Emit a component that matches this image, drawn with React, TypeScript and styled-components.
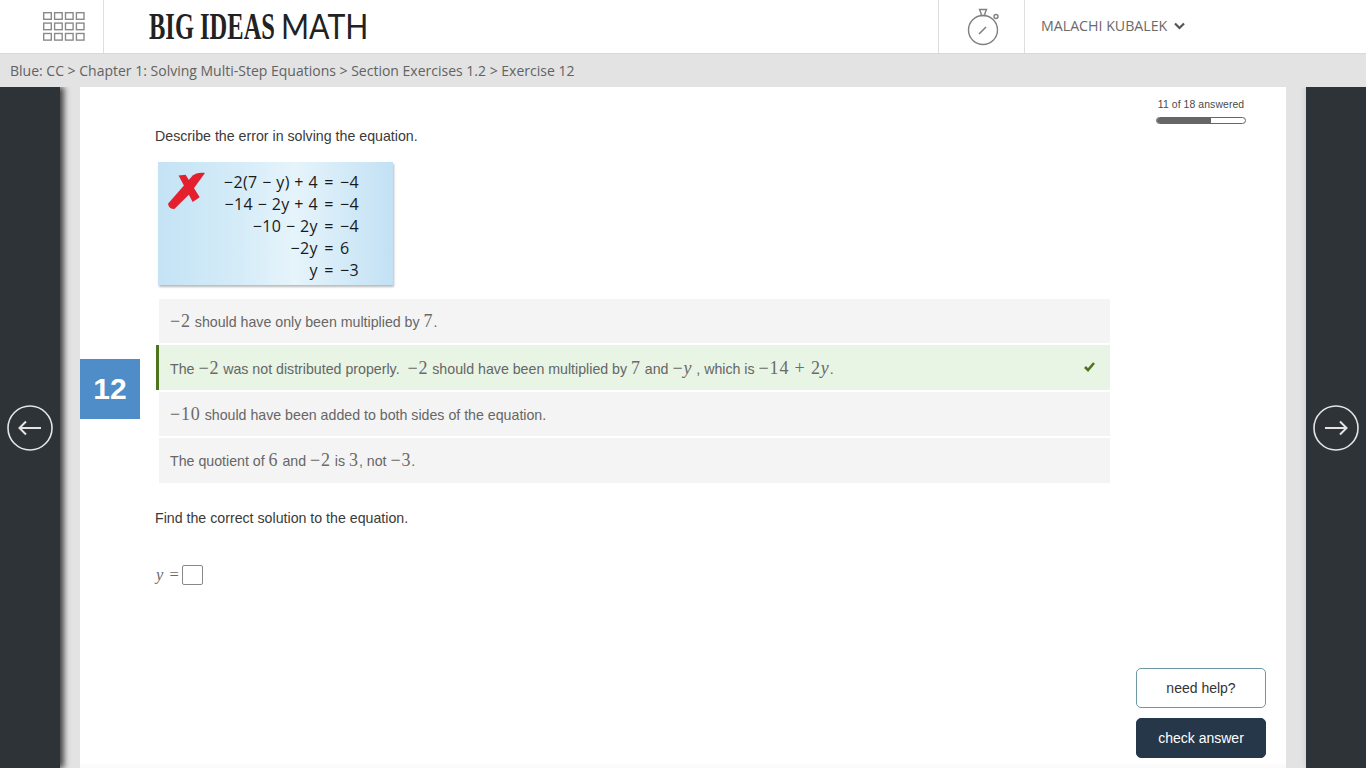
import React from "react";
import styled, { createGlobalStyle } from "styled-components";

const Global = createGlobalStyle`
  html, body { margin: 0; padding: 0; height: 768px; overflow: hidden; background: #e3e3e3; }
  * { box-sizing: border-box; }
  #root { height: 768px; }
`;

const Page = styled.div`
  width: 1366px; height: 768px; display: flex; flex-direction: column;
  font-family: "Liberation Sans", Arial, sans-serif;
`;
const Header = styled.header`
  height: 54px; flex: none; display: flex; background: #fff; border-bottom: 1px solid #d9d9d9;
`;
const MenuCell = styled.div`
  width: 104px; display: flex; align-items: center; padding-left: 43px;
  border-right: 1px solid #dedede;
`;
const LogoCell = styled.div`
  width: 834px; padding: 0 0 2px 45px; display: flex; align-items: center; overflow: hidden;
`;
const LogoBold = styled.span`
  display: inline-block; width: 132px; font: 700 38px/1 "Liberation Serif", serif; color: #222;
  white-space: nowrap; transform: scaleX(.645); transform-origin: left center;
`;
const LogoLight = styled.span`
  display: inline-block; font: 400 34px/1 Lato, sans-serif; color: #222;
  white-space: nowrap; transform: scaleX(.89); transform-origin: left center;
`;
const TimerCell = styled.div`
  width: 87px; padding-left: 5px; display: flex; align-items: center; justify-content: center;
  border-left: 1px solid #dedede; border-right: 1px solid #dedede;
`;
const UserCell = styled.div`
  padding: 0 0 2px 16px; display: flex; align-items: center; gap: 7px;
  font: 400 14.2px "Open Sans", sans-serif; color: #6a6a6a;
`;
const Crumb = styled.nav`
  height: 33px; flex: none; padding-left: 10px; display: flex; align-items: center;
  background: #e3e3e3; font: 400 14px "Open Sans", sans-serif; color: #626262;
`;
const Main = styled.main`
  flex: 1; min-height: 0; display: flex; background: #e3e3e3; overflow: hidden;
`;
const Rail = styled.aside<{ $side: "left" | "right" }>`
  width: 60px; flex: none; display: flex; align-items: center; justify-content: center;
  background: #2e3338; padding-top: 1px;
  box-shadow: ${(p) => (p.$side === "left" ? "4px 0 6px #444" : "-2px 0 4px #d4d4d4")};
`;
const Panel = styled.section`
  flex: 1; margin: 0 20px; display: flex; padding-left: 75px; position: relative;
  background: linear-gradient(#fff calc(100% - 6px), #f9f9f9);
`;
const Badge = styled.div`
  position: absolute; left: 0; top: 272px; width: 60px; height: 60px;
  display: flex; align-items: center; justify-content: center;
  background: #4f8dc8; color: #fff; font: 700 30px "Liberation Sans", sans-serif;
`;
const Content = styled.div`
  width: 955px; flex: none;
`;
const Prompt = styled.p<{ $top: number }>`
  margin: ${(p) => p.$top}px 0 0; font-size: 14.2px; line-height: 18px; color: #3a3a3a;
`;
const ErrorCard = styled.div`
  margin: 17px 0 0 3px; width: 235px; height: 123px; padding: 9px 0 0 10px; display: flex;
  background: linear-gradient(90deg, #c4e3f5 0%, #d5ecf8 35%, #e6f4fb 58%, #c2e1f4 100%);
  box-shadow: 1px 2px 2px #bbb;
`;
const EqGrid = styled.div`
  margin-left: 13px; display: grid; grid-template-columns: 100px 22px auto; grid-auto-rows: 22px;
  align-items: center; font: 500 16px "Open Sans", sans-serif; color: #1a1a1a; white-space: nowrap;
  letter-spacing: .4px;
`;
const Lhs = styled.span` text-align: right; `;
const Eq = styled.span` text-align: center; `;
const Rhs = styled.span``;
const Options = styled.div`
  margin: 14px 0 0 4px; display: flex; flex-direction: column; gap: 2px;
`;
const Option = styled.div<{ $correct?: boolean; $h: number }>`
  height: ${(p) => p.$h}px; display: flex; align-items: center; justify-content: space-between;
  margin-left: ${(p) => (p.$correct ? -3 : 0)}px;
  padding: ${(p) => (p.$correct ? 1 : 0)}px 15px 0 11px;
  background: ${(p) => (p.$correct ? "#e8f4e4" : "#f4f4f4")};
  border-left: ${(p) => (p.$correct ? "3px solid #4e7420" : "none")};
  font-size: 14.2px; color: #666;
`;
const M = styled.span`
  font: 400 18px "Liberation Serif", serif; color: #6a6a6a; letter-spacing: .85px;
`;
const MI = styled(M)` font-style: italic; `;
const AnswerRow = styled.div`
  margin-top: 38px; display: flex; align-items: center; gap: 3px; padding-left: 1px;
`;
const AnswerSym = styled.span`
  font: 400 16.5px "Liberation Serif", serif; color: #6a6a6a; word-spacing: 2px;
`;
const AnswerBox = styled.div`
  width: 21px; height: 20px; border: 1px solid #888; border-radius: 2px; background: #fff;
`;
const Side = styled.div`
  margin-left: 26px; width: 130px; flex: none; display: flex; flex-direction: column; align-items: center;
  padding: 11px 0 10px;
`;
const ProgressLabel = styled.div`
  font-size: 10.4px; line-height: 14px; color: #4a4a4a; letter-spacing: .1px;
`;
const ProgressTrack = styled.div`
  margin-top: 5px; width: 90px; height: 7px; border: 1px solid #666; border-radius: 4px; overflow: hidden; background: #fff;
`;
const ProgressFill = styled.div`
  height: 100%; background: #666;
`;
const Buttons = styled.div`
  margin-top: auto; width: 100%; display: flex; flex-direction: column; gap: 10px;
`;
const Btn = styled.button<{ $primary?: boolean }>`
  height: 40px; width: 100%; border-radius: 5px; font: 400 14px "Liberation Sans", sans-serif; padding: 0;
  border: 1px solid ${(p) => (p.$primary ? "#26374a" : "#6f97a8")};
  background: ${(p) => (p.$primary ? "#26374a" : "#fff")};
  color: ${(p) => (p.$primary ? "#fff" : "#333")};
`;

const GridIcon = () => (
  <svg width="42" height="29" viewBox="0 0 42 29" fill="none" stroke="#8a8a8a" strokeWidth="1.4">
    {[0, 1, 2].map((r) =>
      [0, 1, 2, 3].map((c) => <rect key={`${r}-${c}`} x={0.7 + c * 10.9} y={0.7 + r * 10.4} width="7.6" height="6.6" />)
    )}
  </svg>
);
const Stopwatch = () => (
  <svg width="34" height="38" viewBox="0 0 34 38" fill="none" stroke="#808080" strokeWidth="1.4">
    <circle cx="16" cy="22" r="14.5" />
    <path d="M12.5 1.5h7l-1.6 4v2h-3.8v-2z" />
    <circle cx="29" cy="8.5" r="2" />
    <path d="M12 26l7-7" strokeWidth="1.6" />
  </svg>
);
const Chevron = () => (
  <svg width="11" height="8" viewBox="0 0 11 8" fill="none" stroke="#555" strokeWidth="2.2">
    <path d="M1 1.5l4.5 4.5L10 1.5" />
  </svg>
);
const RedX = () => (
  <svg width="37" height="37" viewBox="0 0 105 105" fill="#e4202f" style={{ flex: "none", marginTop: 1 }}>
    <path d="M105 3C90 0 78 4 70 10L0 90Q2 105 18 105L62 62Z" />
    <path d="M30 10L50 8L90 72L70 85Z" />
  </svg>
);
const Check = () => (
  <svg width="11" height="10" viewBox="0 0 11 10" fill="none" stroke="#4e7420" strokeWidth="2.6" style={{ marginTop: -2 }}>
    <path d="M1 5l3 3 6-7" />
  </svg>
);
const Arrow = ({ dir }: { dir: "left" | "right" }) => (
  <svg width="46" height="46" viewBox="0 0 46 46" fill="none" stroke="#e4e4e4" strokeWidth="2">
    <circle cx="23" cy="23" r="22" strokeWidth="1.6" />
    {dir === "left" ? <path d="M34 23H13M19 16.5L12.5 23l6.5 6.5" /> : <path d="M12 23h21M27 16.5l6.5 6.5-6.5 6.5" />}
  </svg>
);

export default function App() {
  return (
    <Page>
      <Global />
      <Header>
        <MenuCell><GridIcon /></MenuCell>
        <LogoCell>
          <LogoBold>BIG IDEAS</LogoBold>
          <LogoLight>MATH</LogoLight>
        </LogoCell>
        <TimerCell><Stopwatch /></TimerCell>
        <UserCell>MALACHI KUBALEK <Chevron /></UserCell>
      </Header>
      <Crumb>Blue: CC &gt; Chapter 1: Solving Multi-Step Equations &gt; Section Exercises 1.2 &gt; Exercise 12</Crumb>
      <Main>
        <Rail $side="left"><Arrow dir="left" /></Rail>
        <Panel>
          <Badge>12</Badge>
          <Content>
            <Prompt $top={40}>Describe the error in solving the equation.</Prompt>
            <ErrorCard>
              <RedX />
              <EqGrid>
                <Lhs>−2(7 − y) + 4</Lhs><Eq>=</Eq><Rhs>−4</Rhs>
                <Lhs>−14 − 2y + 4</Lhs><Eq>=</Eq><Rhs>−4</Rhs>
                <Lhs>−10 − 2y</Lhs><Eq>=</Eq><Rhs>−4</Rhs>
                <Lhs>−2y</Lhs><Eq>=</Eq><Rhs>6</Rhs>
                <Lhs>y</Lhs><Eq>=</Eq><Rhs>−3</Rhs>
              </EqGrid>
            </ErrorCard>
            <Options>
              <Option $h={44}><span><M>−2</M> should have only been multiplied by <M>7</M>.</span></Option>
              <Option $h={45} $correct>
                <span>The <M>−2</M> was not distributed properly. &nbsp;<M>−2</M> should have been multiplied by <M>7</M> and <M>−</M><MI>y</MI> , which is <M>−14 + 2</M><MI>y</MI>.</span>
                <Check />
              </Option>
              <Option $h={44}><span><M>−10</M> should have been added to both sides of the equation.</span></Option>
              <Option $h={45}><span>The quotient of <M>6</M> and <M>−2</M> is <M>3</M>, not <M>−3</M>.</span></Option>
            </Options>
            <Prompt $top={26}>Find the correct solution to the equation.</Prompt>
            <AnswerRow>
              <AnswerSym><em>y</em> =</AnswerSym>
              <AnswerBox />
            </AnswerRow>
          </Content>
          <Side>
            <ProgressLabel>11 of 18 answered</ProgressLabel>
            <ProgressTrack><ProgressFill style={{ width: `${(11 / 18) * 100}%` }} /></ProgressTrack>
            <Buttons>
              <Btn>need help?</Btn>
              <Btn $primary>check answer</Btn>
            </Buttons>
          </Side>
        </Panel>
        <Rail $side="right"><Arrow dir="right" /></Rail>
      </Main>
    </Page>
  );
}
